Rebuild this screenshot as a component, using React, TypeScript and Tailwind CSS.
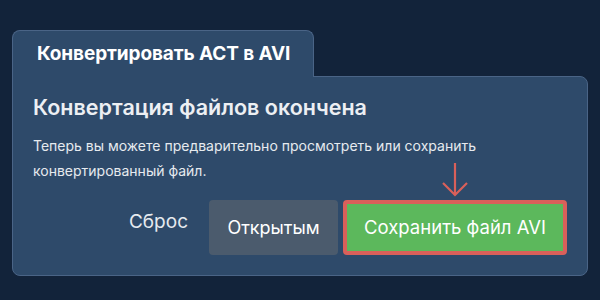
export default function App() {
  return (
    <div className="h-[300px] w-[600px] bg-[#12233a] pl-3 pt-[30px] font-['Inter',sans-serif] text-[#eef1f5]">
      <div className="relative z-10 -mb-px flex h-[47px] w-[302px] items-center rounded-t-lg border border-b-0 border-[#4a6486] bg-[#2e4a6a] pl-6">
        <span className="text-[19px] font-bold tracking-[-0.1px] text-white">Конвертировать ACT в AVI</span>
      </div>
      <div className="w-[576px] rounded-b-lg rounded-tr-lg border border-[#4a6486] bg-[#2e4a6a] px-5 pb-5 pt-4">
        <h1 className="text-[21.5px] font-semibold leading-7 text-[#eceff3]">Конвертация файлов окончена</h1>
        <p className="mt-3 text-[14px] leading-[25px] text-[#e6eaef]">
          Теперь вы можете предварительно просмотреть или сохранить конвертированный файл.
        </p>
        <div className="-mt-[2px] flex items-end justify-end gap-[5px]">
          <button className="mb-[2px] flex h-[55px] items-center pl-5 pr-4 pb-[6px] text-[19px] text-[#e6eaef]">Сброс</button>
          <button className="flex h-[55px] w-[129px] items-center justify-center rounded bg-[#4b5b6d] text-[18px] text-white">
            Открытым
          </button>
          <div className="flex flex-col items-center">
            <svg width="30" height="38" viewBox="0 0 30 38" className="-mt-[20px] mb-[1px]">
              <path d="M15 2 V34 M3 22 L15 34 L27 22" fill="none" stroke="#d9605a" strokeWidth="2.2" />
            </svg>
            <button className="flex h-[55px] w-[224px] items-center justify-center rounded border-4 border-[#d9605a] bg-[#5cb85c] text-[18.5px] text-white">
              Сохранить файл AVI
            </button>
          </div>
        </div>
      </div>
    </div>
  )
}
